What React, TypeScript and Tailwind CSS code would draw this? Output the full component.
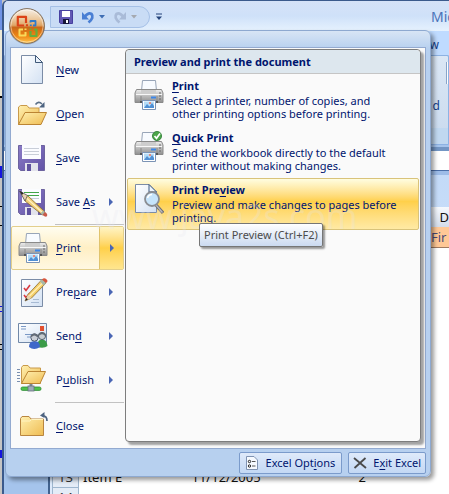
import { FunctionComponent, ReactNode } from 'react';

interface MnemonicProps {
  text: string;
  at: number;
}

const Mnemonic: FunctionComponent<MnemonicProps> = ({ text, at }: MnemonicProps) => (
  <span>
    {text.slice(0, at)}
    <span className="underline underline-offset-2">{text[at]}</span>
    {text.slice(at + 1)}
  </span>
);

const Gradients = () => (
  <svg width="0" height="0" className="absolute" aria-hidden="true">
    <defs>
      <linearGradient id="paper" x1="0" y1="0" x2="1" y2="1">
        <stop offset="0" stopColor="#ffffff" />
        <stop offset="1" stopColor="#d3e1f3" />
      </linearGradient>
      <linearGradient id="folder" x1="0" y1="0" x2="1" y2="1">
        <stop offset="0" stopColor="#fff0b0" />
        <stop offset="1" stopColor="#efbc52" />
      </linearGradient>
      <linearGradient id="grey" x1="0" y1="0" x2="0" y2="1">
        <stop offset="0" stopColor="#eeeeee" />
        <stop offset="0.5" stopColor="#bcbcbc" />
        <stop offset="1" stopColor="#8f8f8f" />
      </linearGradient>
      <linearGradient id="violet" x1="0" y1="0" x2="1" y2="1">
        <stop offset="0" stopColor="#8b7cc6" />
        <stop offset="1" stopColor="#6252a6" />
      </linearGradient>
      <linearGradient id="orb" x1="0" y1="0" x2="0" y2="1">
        <stop offset="0" stopColor="#f6efe6" />
        <stop offset="0.3" stopColor="#ecc99e" />
        <stop offset="0.48" stopColor="#dfa566" />
        <stop offset="0.54" stopColor="#c9681a" />
        <stop offset="0.78" stopColor="#ee8512" />
        <stop offset="1" stopColor="#ffc950" />
      </linearGradient>
    </defs>
  </svg>
);

const Icon = ({ children }: { children: ReactNode }) => (
  <svg viewBox="0 0 32 32" className="size-8 shrink-0" aria-hidden="true">
    {children}
  </svg>
);

const Pencil = () => (
  <g>
    <path d="M9 25 L12 18.5 L26 3.5 L30 7 L15.5 22 Z" fill="#f4cf6a" stroke="#8a6a2c" strokeWidth="0.8" />
    <path d="M13.5 20 L28 5.5" stroke="#fff0b8" strokeWidth="1.2" />
    <path d="M9 25 L12 18.5 L15.5 22 Z" fill="#e9d3b0" />
    <path d="M9 25 L10.3 22 L12 23.6 Z" fill="#222" />
    <path d="M24 5.6 L26 3.5 L30 7 L27.7 9.4 Z" fill="#a8b8a8" />
    <path d="M26 3.5 Q28 1.2 30.4 3.2 T30 7 Z" fill="#d8553c" />
  </g>
);

const NewIcon = () => (
  <Icon>
    <path d="M5.5 1.5 H19.5 L26.5 8.5 V29.5 H5.5 Z" fill="url(#paper)" stroke="#7b8ca6" />
    <path d="M19.5 1.5 V8.5 H26.5 Z" fill="#e9f1fb" stroke="#3f5878" />
  </Icon>
);

const OpenIcon = () => (
  <Icon>
    <path d="M2.5 26.5 V9 L4.5 7.5 H11 L13 10 H23 V26.5 Z" fill="url(#folder)" stroke="#c99a4a" />
    <path d="M2.5 26.5 L9 14.5 H30.5 L25 26.5 Z" fill="url(#folder)" stroke="#bb8433" />
    <path d="M19.5 6.5 Q22.5 2.5 26 6" fill="none" stroke="#5b7088" strokeWidth="1.6" />
    <path d="M28.5 4 V9.5 H23 Z" fill="#4d6380" />
  </Icon>
);

const Floppy = () => (
  <g>
    <path d="M2.5 3.5 H28.5 V28.5 H4.5 L2.5 26.5 Z" fill="url(#violet)" stroke="#6d639f" />
    <rect x="6" y="3" width="19" height="14" fill="#fbfcff" />
    <path d="M8 6.5 H23 M8 9.5 H23 M8 12.5 H23" stroke="#c9ced8" />
    <rect x="9" y="21" width="13" height="8" fill="#e3e3ec" />
    <rect x="11" y="22" width="4" height="7" fill="#5f529f" />
  </g>
);

const SaveIcon = () => (
  <Icon>
    <Floppy />
  </Icon>
);

const SaveAsIcon = () => (
  <Icon>
    <Floppy />
    <path d="M8 6.5 H23 M8 9.5 H23" stroke="#42a548" strokeWidth="1.2" />
    <path d="M7 10 L11.5 9.5 L29 26 L26.5 29 L9 15 Z" fill="#f2cf77" stroke="#82672e" strokeWidth="0.8" />
    <path d="M10.5 12 L27 27" stroke="#fff2c4" strokeWidth="1.2" />
    <path d="M3.5 5 L11.5 9.5 L9 15 Z" fill="#e9d3b0" stroke="#555" strokeWidth="0.8" />
    <path d="M3.5 5 L7.5 7 L6 9 Z" fill="#222" />
    <path d="M24.5 27.4 L27.3 24.4 L29 26 L26.5 29 Z" fill="#a8b8a8" />
    <path d="M26.5 29 L29 26 Q32 28 31 30 T26.5 29 Z" fill="#c95a49" />
  </Icon>
);

const PrinterShape = () => (
  <g>
    <path d="M9.5 12 L10.5 1.5 H23.5 L24.5 12 Z" fill="#f8fbff" stroke="#98a5b8" />
    <path d="M4.5 10.5 H29.5 L31 14 V23.5 H3 V14 Z" fill="url(#grey)" stroke="#8a8a8a" />
    <path d="M9 11 H24 V15 H9 Z" fill="#cdcdcd" />
    <path d="M4 15.5 H30" stroke="#f7f7f7" />
    <path d="M9 17 V23 M25 17 V23" stroke="#8a8a8a" />
    <path d="M27 14 H29 M27 17 H29 M27 20 H29" stroke="#686868" />
    <path d="M19 18.5 H24" stroke="#3b86e8" strokeWidth="2" />
    <path d="M8 22 H26 V24 H8 Z" fill="#555" />
    <path d="M10.5 21.5 H23.5 V30.5 H10.5 Z" fill="#fff" stroke="#7b93b5" />
    <path d="M12 22.5 H22 V29 H12 Z" fill="#b4dcf8" />
    <path d="M12 29 L15 25 L17.5 27.5 L20 24 L22 27 V29 Z" fill="#4f8fd4" />
    <circle cx="18" cy="24" r="1.1" fill="#ef7a63" />
  </g>
);

const PrintIcon = () => (
  <Icon>
    <PrinterShape />
  </Icon>
);

const QuickPrintIcon = () => (
  <Icon>
    <PrinterShape />
    <circle cx="25" cy="5" r="4.6" fill="#4ba54a" stroke="#2c7b34" strokeWidth="0.8" />
    <path d="M22.5 5 L24.5 7.3 L28 2.6" fill="none" stroke="#fff" strokeWidth="1.7" />
  </Icon>
);

const PreviewIcon = () => (
  <Icon>
    <path d="M3.5 1.5 H17 L24.5 9 V29.5 H3.5 Z" fill="url(#paper)" stroke="#7b8ca6" />
    <path d="M17 1.5 V9 H24.5 Z" fill="#edf4fc" stroke="#3f5a80" />
    <path d="M24 22 L31 30" stroke="#6d6d72" strokeWidth="3.4" />
    <path d="M24 22 L30.5 29.5" stroke="#b8b8bd" strokeWidth="1.2" />
    <circle cx="20" cy="16" r="7" fill="#c6e4fb" stroke="#8a8d93" strokeWidth="1.8" />
    <path d="M15.5 15 Q16.5 11.5 20 11.5" fill="none" stroke="#fff" strokeWidth="1.6" />
  </Icon>
);

const PrepareIcon = () => (
  <Icon>
    <path d="M5.5 3.5 H26.5 V30.5 H5.5 Z" fill="url(#paper)" stroke="#7b8ca6" />
    <path d="M8 12 L10 14.5 L14 9 M8 19 L10 21.5 L14 17" fill="none" stroke="#d8383f" strokeWidth="1.6" />
    <path d="M15 26.5 H23 M17 23.5 H23" stroke="#a7bad3" />
    <Pencil />
  </Icon>
);

const SendIcon = () => (
  <Icon>
    <path d="M2.5 3.5 H30.5 V22.5 H2.5 Z" fill="url(#paper)" stroke="#7188a8" />
    <rect x="24" y="6" width="4" height="5" fill="#e2502f" />
    <path d="M5 6.5 H10 M5 9 H10 M9 14.5 H18 M11 17 H17" stroke="#7a98c5" />
    <path d="M21 27 Q21 19.5 26 19.5 T31.5 26 Q28 29 21 27 Z" fill="#3b9b47" />
    <circle cx="26" cy="16" r="3.6" fill="#c7ccd0" stroke="#55606b" />
    <path d="M13 27 Q13 21 18.5 21 T24 27 Q18 31 13 27 Z" fill="#3f68c9" />
    <circle cx="18.5" cy="17.5" r="3.7" fill="#c9ced6" stroke="#505c70" />
    <path d="M15 16.5 Q18 12.5 22 16.5 M22.8 15 Q26 11.5 29.4 15" fill="none" stroke="#626b76" strokeWidth="1.8" />
  </Icon>
);

const PublishIcon = () => (
  <Icon>
    <path d="M1 5.5 H4 M1 8.5 H4 M1 11.5 H4 M1 14.5 H4 M1 17.5 H4" stroke="#7a8fb0" />
    <path d="M5.5 19.5 V3.5 L7 1.5 H12 L14 4 H24.5 V19.5 Z" fill="url(#folder)" stroke="#c99a4a" />
    <path d="M5.5 19.5 L12 7.5 H29.5 L24 19.5 Z" fill="url(#folder)" stroke="#bb8433" />
    <path d="M15 20 V25" stroke="#7b8794" strokeWidth="3" />
    <rect x="5" y="23" width="20" height="3.4" rx="1.5" fill="#4fc24b" stroke="#2f8b38" strokeWidth="0.8" />
    <rect x="12" y="22" width="6" height="5" fill="#9eabb8" stroke="#66727f" strokeWidth="0.8" />
  </Icon>
);

const CloseIcon = () => (
  <Icon>
    <path d="M4.5 25.5 V8.5 L6 6.5 H13 L15 9 H27.5 V25.5 Z" fill="url(#folder)" stroke="#b98640" />
    <path d="M5.5 11 H14 L15.5 9.5 H27" fill="none" stroke="#fff3c0" />
    <path d="M31 11 Q31 5.5 26 5.5" fill="none" stroke="#4d6380" strokeWidth="1.7" />
    <path d="M24 5.5 L28.5 2 V8 Z" fill="#4d6380" />
  </Icon>
);

const OfficeLogo = () => (
  <svg viewBox="0 0 38 38" className="size-9.5" aria-hidden="true">
    <circle cx="19" cy="19.5" r="18" fill="#7d8798" opacity="0.45" />
    <circle cx="19" cy="19" r="17.4" fill="url(#orb)" stroke="#84705c" />
    <circle cx="19" cy="19" r="16.2" fill="none" stroke="#fff" strokeOpacity="0.45" />
    <g fill="none" strokeLinejoin="round">
      <path d="M16 18.5 H9.8 V9.8 H18 V16" stroke="#dc4318" strokeWidth="2.2" />
      <path d="M22.5 15.5 V14 H27.5 V18.5 H25 M22.8 17.5 V19" stroke="#2f7ac9" strokeWidth="1.8" />
      <path d="M15 22.5 H11.5 V28.5 H17.5 V25 M17.5 23 V21.5" stroke="#f9d95a" strokeWidth="2" />
      <path d="M22.5 24 V29 H28.5 V22.5 H26 M22.5 22.8 V21.5" stroke="#67ac3c" strokeWidth="2.2" />
      <path d="M18 18.3 H20" stroke="#dc4318" strokeWidth="2" />
    </g>
  </svg>
);

const Arrow = () => (
  <svg viewBox="0 0 4 8" className="h-2 w-1" aria-hidden="true">
    <path d="M0 0 L4 4 L0 8 Z" fill="#4a66b4" />
  </svg>
);

interface MenuItemProps {
  icon: ReactNode;
  text: string;
  at: number;
  arrow?: boolean;
  active?: boolean;
}

const MenuItem: FunctionComponent<MenuItemProps> = ({ icon, text, at, arrow, active }: MenuItemProps) => (
  <li>
    <button
      type="button"
      className={
        active
          ? 'flex h-11 w-full items-center rounded-xs border border-[#e3cf8c] bg-linear-to-b from-[#fffdf0] via-[#ffefc4] to-[#fff8e2] pl-1 text-left'
          : 'flex h-11 w-full items-center border border-transparent pl-1 text-left'
      }
    >
      {icon}
      <span className="flex-1 pl-2">
        <Mnemonic text={text} at={at} />
      </span>
      {arrow && (
        <span
          className={
            active
              ? 'flex w-6 items-center justify-center self-stretch border-l border-[#e0c36c] bg-linear-to-b from-[#fff4c4] via-[#ffd048] to-[#ffe68e]'
              : 'flex w-6 items-center justify-center'
          }
        >
          <Arrow />
        </span>
      )}
    </button>
  </li>
);

interface PrintOptionProps {
  icon: ReactNode;
  title: string;
  at: number;
  lines: string[];
  active?: boolean;
}

const PrintOption: FunctionComponent<PrintOptionProps> = ({ icon, title, at, lines, active }: PrintOptionProps) => (
  <li>
    <button
      type="button"
      className={
        active
          ? 'flex h-13 w-full items-start rounded-xs border border-[#d9c37a] bg-linear-to-b from-[#fffde0] via-[#ffd04a] via-45% to-[#ffeaa4] pt-1 pl-1 text-left'
          : 'flex h-13 w-full items-start border border-transparent pt-1 pl-1 text-left'
      }
    >
      {icon}
      <span className="block pl-2 leading-[13px] whitespace-nowrap">
        <span className="mb-0.5 block font-bold">
          <Mnemonic text={title} at={at} />
        </span>
        {lines.map((line) => (
          <span key={line} className="block">
            {line}
          </span>
        ))}
      </span>
    </button>
  </li>
);

const QuickAccess = () => (
  <div className="flex h-5.5 items-center gap-2 rounded-r-full border border-[#a5c0e6] bg-[#c9dcf5] pr-3 pl-2">
    <button type="button" aria-label="Save">
      <svg viewBox="0 0 14 14" className="size-3.5">
        <path d="M0.5 0.5 H13.5 V13.5 H1.5 L0.5 12.5 Z" fill="#6258b4" stroke="#4740a0" />
        <rect x="3" y="1" width="8" height="6" fill="#fff" />
        <rect x="4" y="9" width="6" height="5" fill="#16163a" />
        <rect x="7" y="10" width="2" height="3" fill="#fff" />
      </svg>
    </button>
    <button type="button" aria-label="Undo" className="flex items-center gap-1">
      <svg viewBox="0 0 14 14" className="size-3.5">
        <path d="M4 6.5 Q7.5 2 10.5 4 Q13.5 7.5 7.5 12.5" fill="none" stroke="#4a7fd4" strokeWidth="2.8" />
        <path d="M1 2 V9.5 H8 Z" fill="#4a7fd4" />
      </svg>
      <svg viewBox="0 0 6 4" className="h-1 w-1.5">
        <path d="M0 0 H6 L3 3.5 Z" fill="#3f6eb4" />
      </svg>
    </button>
    <button type="button" aria-label="Redo" className="flex items-center gap-1">
      <svg viewBox="0 0 14 14" className="size-3.5">
        <path d="M10 6.5 Q6.5 2 3.5 4 Q0.5 7.5 6.5 12.5" fill="none" stroke="#a9bbd8" strokeWidth="2.8" />
        <path d="M13 2 V9.5 H6 Z" fill="#a9bbd8" />
      </svg>
      <svg viewBox="0 0 6 4" className="h-1 w-1.5">
        <path d="M0 0 H6 L3 3.5 Z" fill="#a5a9b0" />
      </svg>
    </button>
  </div>
);

const emptyRows = [1, 2, 3, 4, 5, 6, 7, 8, 9, 10, 11];

const Worksheet = () => (
  <table className="w-full table-fixed border-collapse bg-white text-[13px] leading-4 text-[#111]">
    <colgroup>
      <col className="w-6.5" />
      <col className="w-28" />
      <col className="w-29" />
      <col />
      <col className="w-5" />
    </colgroup>
    <thead>
      <tr className="h-5 bg-linear-to-b from-[#f6f9fd] to-[#d3dcea]">
        <th />
        <th />
        <th />
        <th />
        <th className="p-0 text-right font-normal">D</th>
      </tr>
    </thead>
    <tbody>
      <tr className="h-5">
        <th className="bg-[#e4ecf7]" />
        <td />
        <td />
        <td />
        <td className="border-b border-[#a07a60] bg-[#ffc896] p-0 pl-0.5 text-[#4a4a78]">Fir</td>
      </tr>
      {emptyRows.map((row) => (
        <tr key={row} className="h-5">
          <th className="bg-[#e4ecf7]" />
          <td colSpan={4} />
        </tr>
      ))}
      <tr className="h-5">
        <th className="border border-[#9eb6ce] bg-[#e4ecf7] p-0 font-normal text-[#333]">13</th>
        <td className="p-0 pl-1">Item E</td>
        <td className="p-0 pl-px">11/12/2005</td>
        <td className="p-0 pl-13">2</td>
        <td />
      </tr>
      <tr className="h-5">
        <th className="border border-[#9eb6ce] bg-[#e4ecf7] p-0 font-normal text-[#333]">14</th>
        <td colSpan={4} />
      </tr>
    </tbody>
  </table>
);

const AppWindow = () => (
  <div className="flex min-w-0 flex-1 flex-col overflow-hidden rounded-tl-md border-t border-l-2 border-[#3b5a8c] bg-[#a5c4ec]">
    <header className="flex h-7.5 items-center bg-linear-to-b from-[#d5e2f7] via-[#cfe1f9] to-[#e6f2fe] pt-0.5 pl-11.5">
      <QuickAccess />
      <button type="button" aria-label="Customize Quick Access Toolbar" className="ml-1.5">
        <svg viewBox="0 0 6 7" className="h-2 w-1.5">
          <path d="M0 0.5 H6" stroke="#24437a" />
          <path d="M0 3 H6 L3 6.5 Z" fill="#24437a" />
        </svg>
      </button>
      <h1 className="ml-auto w-4.5 overflow-hidden text-sm whitespace-nowrap text-[#4a72b8]">Mic</h1>
    </header>
    <nav className="flex h-6 items-center justify-end bg-[#bfdbff] pt-1 pr-2.5 text-xs text-[#15428b]">w</nav>
    <section className="flex h-22.5 flex-col justify-between rounded-t-xs border border-[#8db2e3] bg-linear-to-b from-[#dbe7f5] to-[#c9daee]">
      <div className="mt-1.5 h-5.5 w-0.5 self-end border-l border-[#8aa4c8] bg-white" />
      <p className="pr-2 text-right text-xs leading-4 text-[#15428b]">d</p>
      <div className="h-4 bg-[#c0d8f0]" />
    </section>
    <div className="mt-0.5 h-1 bg-[#7396c4]" />
    <div className="h-5 border-b border-[#4a6ea8] bg-white" />
    <div className="flex flex-1 flex-col border-t-4 border-[#9dbce8] pl-11">
      <div className="flex flex-1 flex-col border-l-2 border-[#41628f] bg-linear-to-b from-[#c3daf8] to-[#dfebfb] pt-8 pl-0.5">
        <Worksheet />
      </div>
    </div>
  </div>
);

const OfficeMenu = () => (
  <div
    role="menu"
    className="absolute top-7.5 right-[18px] left-[5px] rounded-md border border-[#8ea9d0] bg-linear-to-b from-[#d8e5f5] to-[#b7d0ef] to-4% px-1 pt-4 shadow-[3px_3px_4px_rgba(0,0,0,0.4)]"
  >
    <div className="flex border border-[#93aad0] bg-[#fafafa]">
      <ul className="w-[113px] shrink-0">
        <MenuItem icon={<NewIcon />} text="New" at={0} />
        <MenuItem icon={<OpenIcon />} text="Open" at={0} />
        <MenuItem icon={<SaveIcon />} text="Save" at={0} />
        <MenuItem icon={<SaveAsIcon />} text="Save As" at={5} arrow />
        <li className="mb-px ml-11 border-t border-[#c2c2c2]" />
        <MenuItem icon={<PrintIcon />} text="Print" at={0} arrow active />
        <MenuItem icon={<PrepareIcon />} text="Prepare" at={3} arrow />
        <MenuItem icon={<SendIcon />} text="Send" at={3} arrow />
        <MenuItem icon={<PublishIcon />} text="Publish" at={1} arrow />
        <li className="mb-px ml-11 border-t border-[#c2c2c2]" />
        <MenuItem icon={<CloseIcon />} text="Close" at={0} />
      </ul>
      <section className="mt-px mr-1 mb-1.5 ml-px min-w-0 flex-1 rounded-sm border border-[#7d7d7d] bg-[#fafafa] shadow-[3px_3px_2px_rgba(0,0,0,0.35)]">
        <h2 className="h-6 rounded-t-sm border-b border-[#c5c5c5] bg-[#dde7ee] pl-2 leading-6 font-bold whitespace-nowrap">
          Preview and print the document
        </h2>
        <ul className="px-px">
          <PrintOption
            icon={<PrintIcon />}
            title="Print"
            at={0}
            lines={['Select a printer, number of copies, and', 'other printing options before printing.']}
          />
          <PrintOption
            icon={<QuickPrintIcon />}
            title="Quick Print"
            at={0}
            lines={['Send the workbook directly to the default', 'printer without making changes.']}
          />
          <PrintOption
            icon={<PreviewIcon />}
            title="Print Preview"
            at={9}
            lines={['Preview and make changes to pages before', 'printing.']}
            active
          />
        </ul>
      </section>
    </div>
    <footer className="flex items-center justify-end gap-1.5 pt-[3px] pb-0.5">
      <button
        type="button"
        className="flex h-5.5 items-center gap-2 rounded-xs border border-[#7b9bcb] bg-linear-to-b from-[#dfeafa] to-[#c3d8f4] px-1.5"
      >
        <svg viewBox="0 0 12 14" className="h-3.5 w-3" aria-hidden="true">
          <path d="M0.5 0.5 H8 L11.5 4 V13.5 H0.5 Z" fill="#f6faff" stroke="#8093b2" />
          <circle cx="3.5" cy="5.5" r="1.2" fill="none" stroke="#222" />
          <circle cx="3.5" cy="10" r="1.2" fill="none" stroke="#222" />
          <path d="M6 5.5 H9.5 M6 10 H9.5" stroke="#555" />
        </svg>
        <Mnemonic text="Excel Options" at={9} />
      </button>
      <button
        type="button"
        className="flex h-5.5 items-center gap-1.5 rounded-xs border border-[#7b9bcb] bg-linear-to-b from-[#dfeafa] to-[#c3d8f4] px-1"
      >
        <svg viewBox="0 0 14 12" className="h-3 w-3.5" aria-hidden="true">
          <path d="M1 1 L13 11 M12.5 1 L1.5 11" stroke="#4a4a4a" strokeWidth="1.8" />
        </svg>
        <Mnemonic text="Exit Excel" at={1} />
      </button>
    </footer>
  </div>
);

const App = () => {
  return (
    <main className="relative flex min-h-screen overflow-hidden bg-[#c4c4c4] font-['Noto_Sans',sans-serif] text-[11px] text-[#00156e]">
      <Gradients />
      <aside className="flex w-0.5 shrink-0 flex-col">
        <div className="h-7.5 bg-[#6f93e6]" />
        <div className="h-17 border-b-2 border-black bg-[#ece9d8]" />
        <div className="mt-17 h-3 bg-[#1414e0]" />
        <div className="mt-7 h-5 border-y border-black" />
        <div className="mt-20 h-1.5 border-y border-[#1414e0]" />
        <div className="mt-8 h-1.5 border-y border-black" />
        <div className="mt-25 h-2 bg-[#1414e0]" />
      </aside>
      <AppWindow />
      <OfficeMenu />
      <p className="pointer-events-none absolute top-[190px] left-[92px] text-[34px] leading-13 text-[#e6e6f0]/25">
        www.java2s.com
      </p>
      <button type="button" aria-label="Office Button" className="absolute top-[7px] left-2">
        <OfficeLogo />
      </button>
      <div
        role="tooltip"
        className="absolute top-[223px] left-[199px] rounded-xs border border-[#767676] bg-linear-to-b from-white to-[#cbdaf0] px-1 py-0.5 leading-[18px] whitespace-nowrap text-[#4c4c4c] shadow-[2px_2px_2px_rgba(0,0,0,0.4)]"
      >
        Print Preview (Ctrl+F2)
      </div>
    </main>
  );
};

export default App;
